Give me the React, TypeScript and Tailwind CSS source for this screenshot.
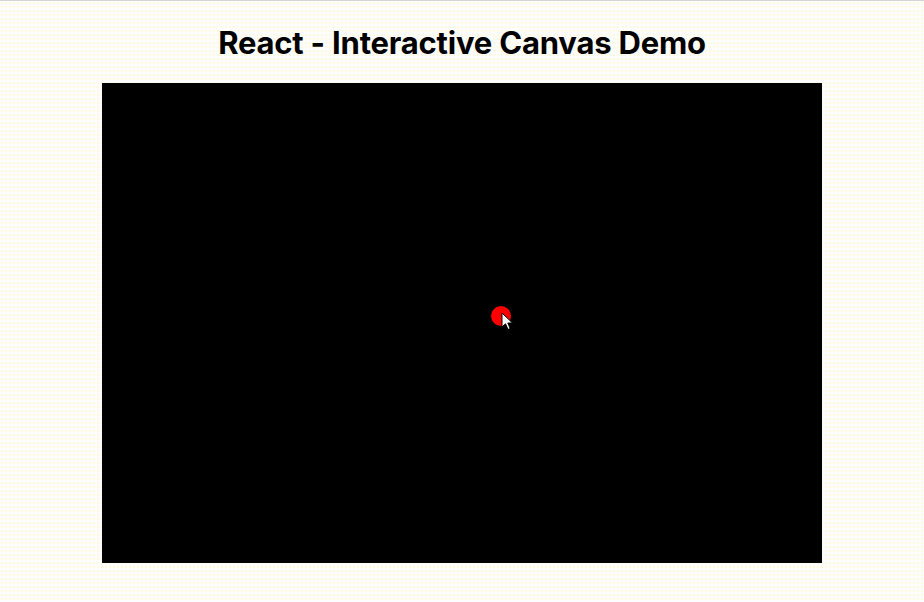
export default function App() {
  return (
    <div className="min-h-[602px] w-full border-t border-[#d4d4d4] bg-[#fdfdff] bg-[radial-gradient(#fff6b5_0.6px,transparent_0.8px)] bg-[size:4px_4px] flex flex-col items-center" style={{ fontFamily: "Inter, 'Noto Sans', sans-serif" }}>
      <h1 className="mt-6 text-[31px] leading-[36px] font-bold text-black tracking-[-0.2px]">React - Interactive Canvas Demo</h1>
      <div className="relative mt-[22px] w-[720px] h-[480px] bg-black">
        {/* ball */}
        <div className="absolute left-[389px] top-[223px] w-5 h-5 rounded-full bg-[#ff0000]"></div>
        {/* mouse pointer */}
        <svg className="absolute left-[399px] top-[229px]" width="13" height="19" viewBox="0 0 13 19">
          <path d="M1 1 L1 15 L4.5 11.8 L7 17.5 L9.2 16.5 L6.8 11 L11.5 11 Z" fill="#fff" stroke="#000" strokeWidth="1" strokeLinejoin="round" />
        </svg>
      </div>
    </div>
  );
}
